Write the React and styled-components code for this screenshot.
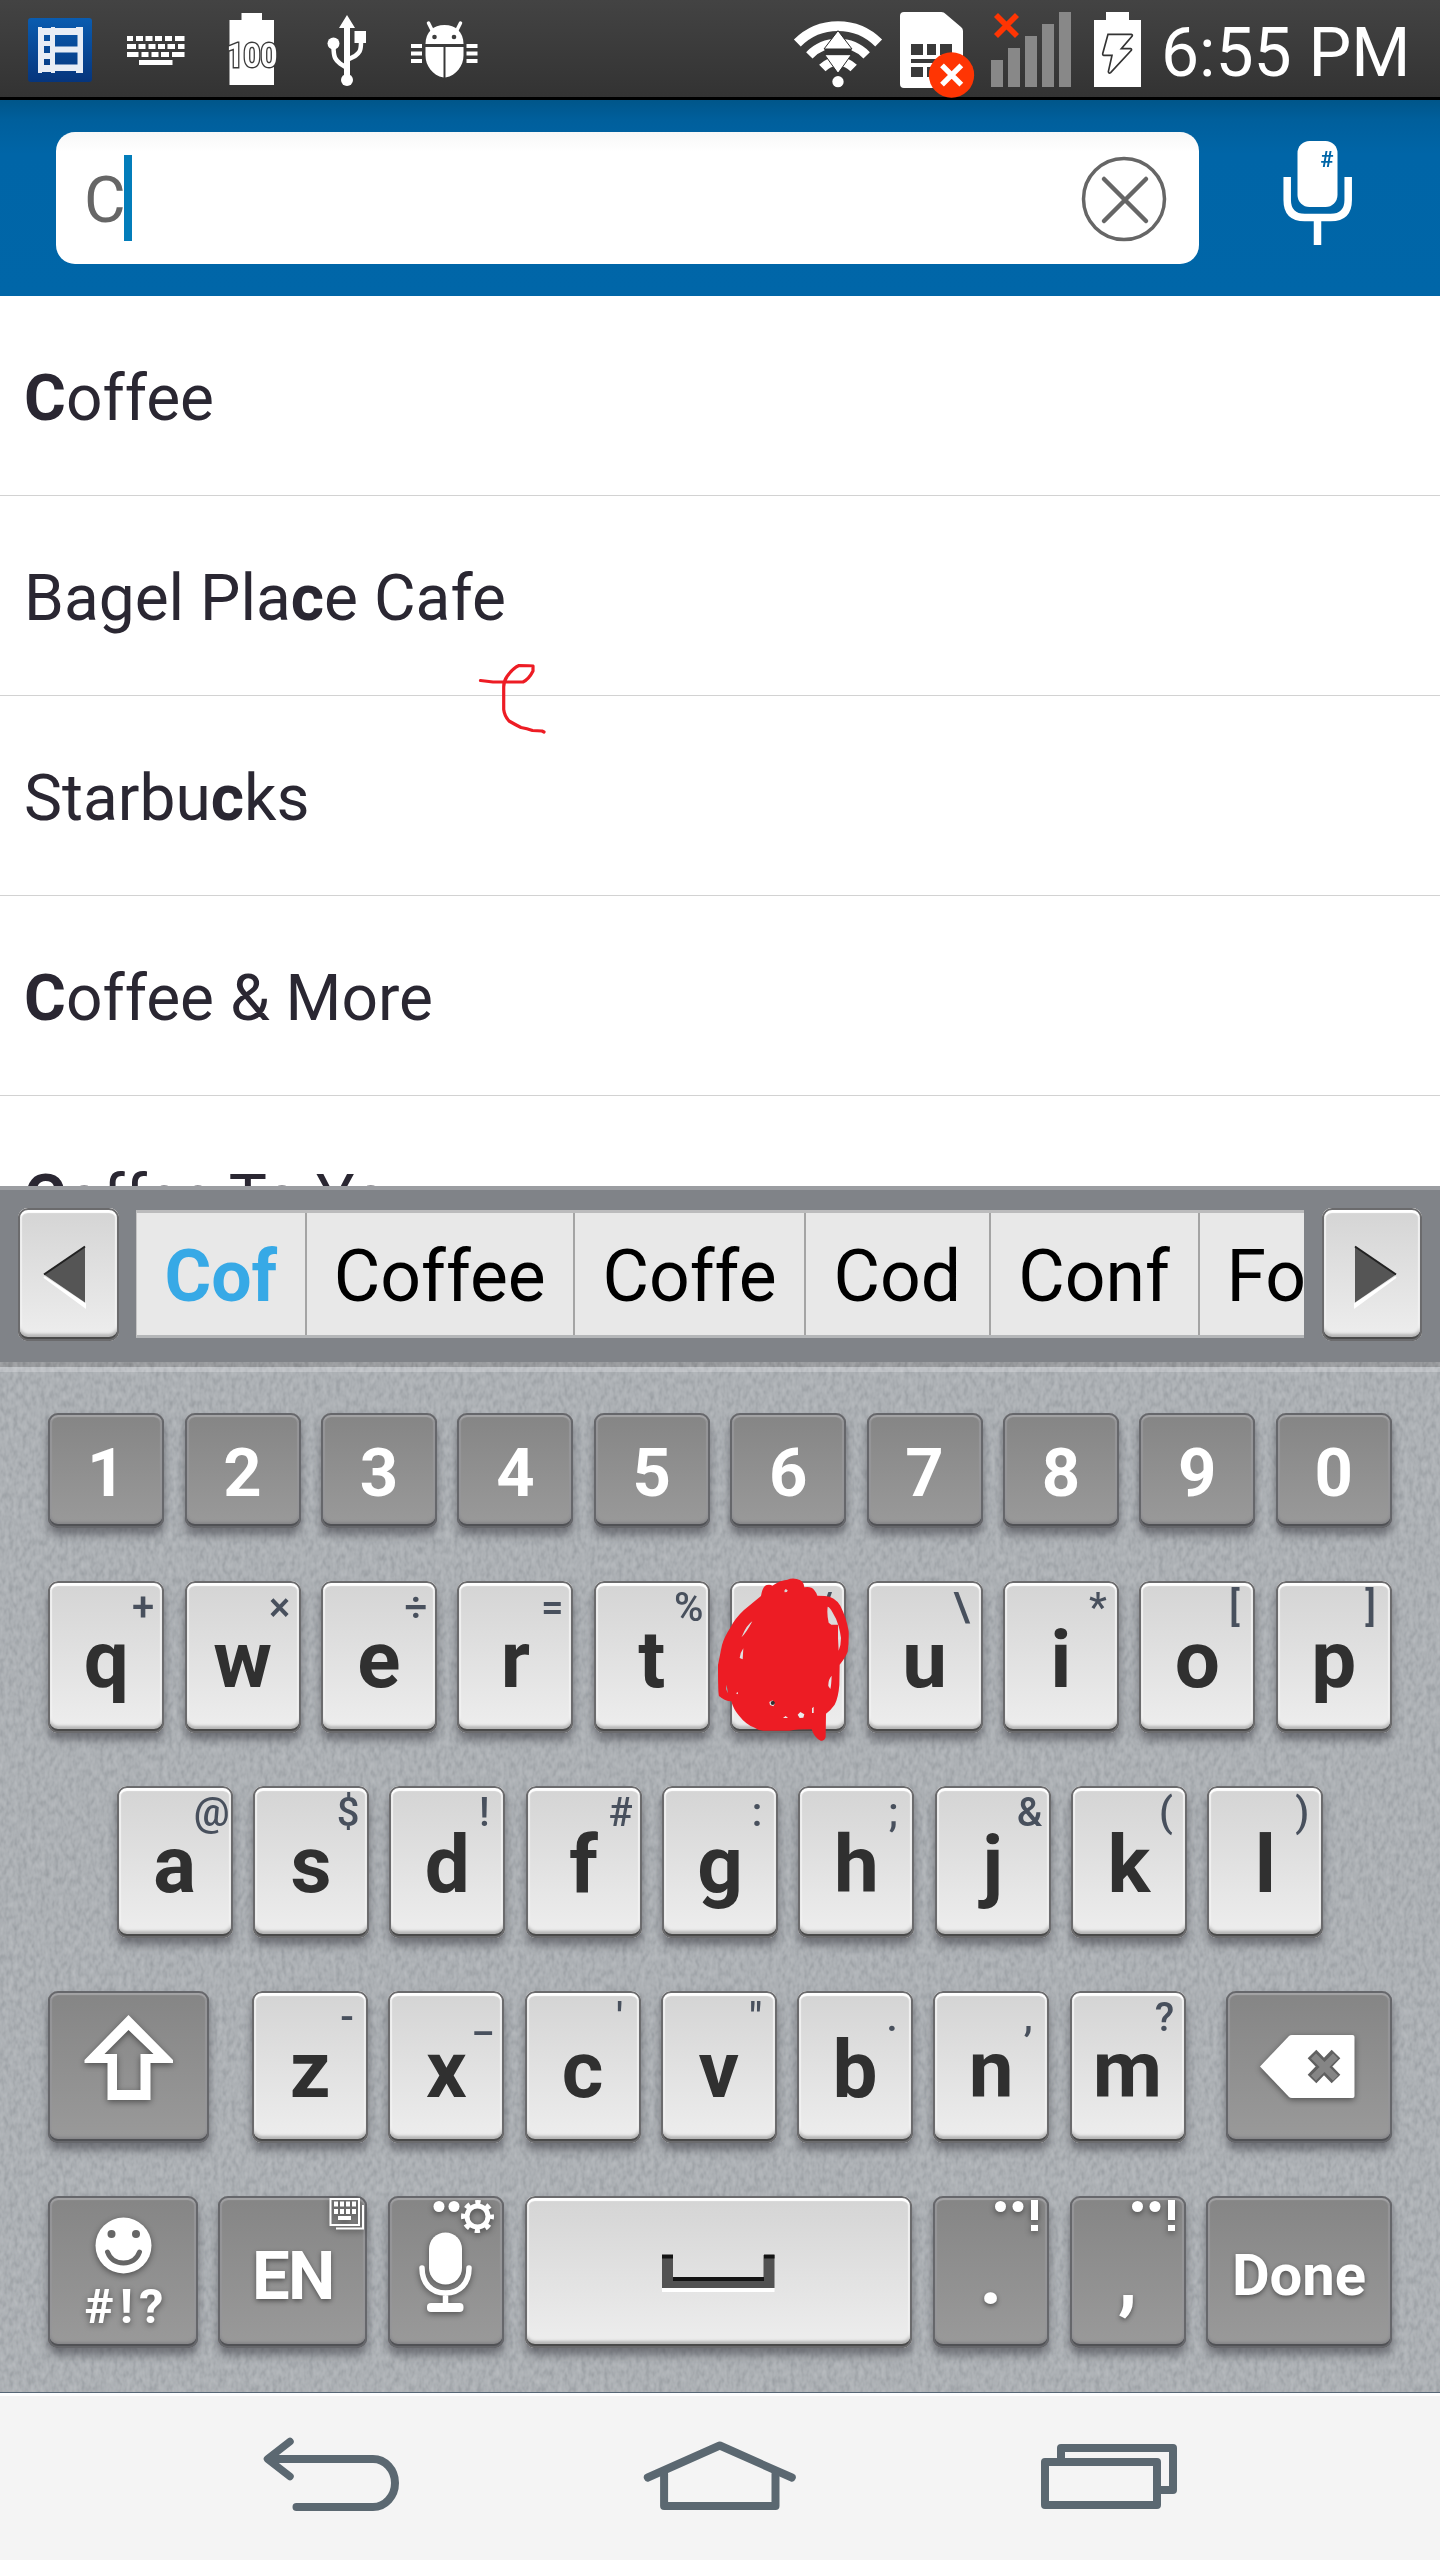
import React from "react";
import styled, { createGlobalStyle, css } from "styled-components";

const GlobalStyle = createGlobalStyle`
  *, *::before, *::after { box-sizing: border-box; }
  body { margin: 0; background: #fff; }
  svg { display: block; overflow: visible; flex: none; }
`;

const Screen = styled.main`
  position: relative;
  display: flex;
  flex-direction: column;
  width: 1440px;
  height: 2560px;
  overflow: hidden;
  background: #fff;
  font-family: Roboto, "Noto Sans", sans-serif;
`;

/* ---------- status bar ---------- */

const StatusBar = styled.header`
  display: flex;
  justify-content: space-between;
  height: 100px;
  padding-left: 12px;
  border-bottom: 3px solid #000;
  background: linear-gradient(#434343, #333);
  color: #fff;
`;

const StatusGroup = styled.div`
  display: flex;
  height: 100px;
`;

const Clock = styled.time`
  width: 290px;
  padding-left: 11px;
  font-size: 67.800px;
  line-height: 106px;
  white-space: nowrap;
`;

function FilmIcon() {
  return (
    <svg width="96" height="100" viewBox="12 0 96 100">
      <defs>
        <linearGradient id="film" x1="0" y1="0" x2="0" y2="1">
          <stop offset="0" stopColor="#0a5cb0" />
          <stop offset="1" stopColor="#06357c" />
        </linearGradient>
      </defs>
      <rect x="28" y="18" width="64" height="64" rx="3" fill="url(#film)" />
      <path
        fill="#e8edf5"
        fillRule="evenodd"
        d="M38 27h4v1h9v-1h4v1h21v-1h7v46h-7v-2H55v2h-4v-1h-9v1h-4zM44 35v6h6v-6zM44 46v7h6v-7zM44 59v6h6v-6zM55 35v11.500h22.500V35zM55 52.500v12h22.500v-12z"
      />
    </svg>
  );
}

const KEY_ROWS = [
  [36, [[127, 6], [136, 7], [145.500, 7], [155, 7], [165, 7], [175, 9.500]]],
  [44, [[127, 9], [138.500, 7], [148.500, 7], [158, 7], [167.500, 7.500], [178, 6.500]]],
  [52, [[127, 11.500], [141.500, 7], [151.500, 7], [161, 8], [172, 12.500]]],
  [60, [[139, 33.500]]],
];

function KeyboardIcon() {
  return (
    <svg width="96" height="100" viewBox="108 0 96 100" fill="#fff">
      {KEY_ROWS.map(([y, keys]) =>
        keys.map(([x, w]) => <rect key={`${x}-${y}`} x={x} y={y} width={w} height="5" />)
      )}
    </svg>
  );
}

function BatteryLevelIcon() {
  return (
    <svg width="96" height="100" viewBox="204 0 96 100" fill="#fff">
      <path d="M241.500 13h20.500v7h12v65h-44.500V20h12z" />
      <text
        x="252"
        y="67"
        textAnchor="middle"
        textLength="51"
        lengthAdjust="spacingAndGlyphs"
        fontSize="34"
        fontWeight="700"
        stroke="#3a3a3a"
        strokeWidth="3"
        paintOrder="stroke"
      >
        100
      </text>
    </svg>
  );
}

function UsbIcon() {
  return (
    <svg width="96" height="100" viewBox="300 0 96 100" fill="#fff">
      <path d="M347 15l8 13h-5v52h-6V28h-5z" />
      <circle cx="347" cy="80" r="6" />
      <circle cx="333.500" cy="43.500" r="6" />
      <rect x="354.500" y="31" width="11.500" height="12" />
      <path
        d="M333.500 46c0 12 2 14 7 18l5 3M361 42c0 10-2 11-6 14l-6 3"
        fill="none"
        stroke="#fff"
        strokeWidth="4.500"
      />
    </svg>
  );
}

function BugIcon() {
  return (
    <svg width="96" height="100" viewBox="396 0 96 100" fill="#fff">
      <path d="M425.500 44c0-12 8-19 19-19s19 7 19 19z" />
      <path d="M428.500 23l4 8M460.500 23l-4 8" stroke="#fff" strokeWidth="3.500" strokeLinecap="round" />
      <g fill="#3c3c3c">
        <circle cx="434.500" cy="37" r="2.300" />
        <circle cx="454" cy="37" r="2.300" />
      </g>
      <path d="M425.500 47h18v30.500c-11-2-18-12-18-22zM445.500 47h18v8.500c0 10-7 20-18 22z" />
      <path d="M411 46h11M411 53.500h11M411 61h11M466.500 46h11M466.500 53.500h11M466.500 61h11" stroke="#fff" strokeWidth="4" />
    </svg>
  );
}

function WifiIcon() {
  return (
    <svg width="104" height="100" viewBox="36 0 312 300">
      <g fill="none" stroke="#fff">
        <path d="M52 129A172 172 0 0 1 296 129" strokeWidth="29" />
        <path d="M88 166A121 121 0 0 1 260 166" strokeWidth="27" />
        <path d="M127 204A66 66 0 0 1 221 204" strokeWidth="27" />
      </g>
      <circle cx="174" cy="245" r="17" fill="#fff" />
      <rect x="134" y="147" width="80" height="16" fill="#333" />
      <path d="M174 92l42 55h-84zM174 220l-40-56h80z" fill="#fff" stroke="#2c2c2c" strokeWidth="3" />
    </svg>
  );
}

function SimIcon() {
  return (
    <svg width="84" height="100" viewBox="348 0 252 300">
      <path d="M372 36H484q8 0 13 6L543 81q6 5 6 12V264H372q-12 0-12-12V48q0-12 12-12z" fill="#fff" />
      <path
        d="M393 132h36v33h-36zM441 132h27v33h-27zM480 132h36v33h-36zM393 177h123v12H393zM393 201h36v30h-36zM441 201h27v30h-27z"
        fill="#3a3a3a"
      />
      <circle cx="514.500" cy="225" r="68" fill="#ff3503" />
      <path d="M486 196l58 58M544 196l-58 58" stroke="#fff" strokeWidth="16" />
    </svg>
  );
}

function SignalIcon() {
  return (
    <svg width="100" height="100" viewBox="600 0 300 300">
      <path d="M633 180h36v81h-36zM684 144h36v117h-36zM735 108h36v153h-36zM786 72h36v189h-36zM837 36h36v225h-36z" fill="#888" />
      <path d="M648 45l63 63M711 45l-63 63" stroke="#ff3503" strokeWidth="17" />
    </svg>
  );
}

function ChargingIcon() {
  return (
    <svg width="70" height="100" viewBox="900 0 210 300">
      <path d="M978 36h69v24h36v201H942V60h36z" fill="#fff" />
      <path
        d="M984 103h70q5 1 2 6l-32 37h28q4 1 2 5l-62 67q-6 4-7-3l11-49h-25q-4-1-3-5z"
        fill="none"
        stroke="#333"
        strokeWidth="5"
      />
    </svg>
  );
}

/* ---------- search header ---------- */

const SearchHeader = styled.section`
  display: flex;
  align-items: center;
  height: 196px;
  padding-left: 56px;
  background: linear-gradient(#00568a 0, #005f9c 20px, #0065a7 54px, #0066a8 100%);
`;

const SearchField = styled.div`
  display: flex;
  align-items: flex-start;
  width: 1143px;
  height: 132px;
  padding-left: 28px;
  border-radius: 19px;
  background: linear-gradient(#f7f7f7, #fff 20px);
`;

const Query = styled.span`
  width: 40px;
  color: #666;
  font-size: 64px;
  line-height: 138px;
`;

const Caret = styled.i`
  width: 8px;
  height: 86px;
  margin-top: 23px;
  background: #037dba;
`;

const ClearButton = styled.div`
  margin: 21px 32px 0 auto;
`;

const VoiceButton = styled.div`
  margin-left: 78px;
`;

/* ---------- suggestions ---------- */

const Suggestions = styled.ul`
  height: 890px;
  margin: 0;
  padding: 0;
  overflow: hidden;
  list-style: none;
`;

const Suggestion = styled.li`
  height: 200px;
  padding-left: 24px;
  border-bottom: 1px solid #d2d2d2;
  color: #2a2732;
  font-size: 64px;
  line-height: 206px;
  white-space: nowrap;

  b { font-weight: 700; }
`;

const SUGGESTIONS = [
  ["", "C", "offee"],
  ["Bagel Pla", "c", "e Cafe"],
  ["Starbu", "c", "ks"],
  ["", "C", "offee & More"],
  ["", "C", "offee To Yo"],
];

/* ---------- key caps ---------- */

const lightCap = css`
  color: #303030;
  background: linear-gradient(#d4d4d4, #eeeeee);
  box-shadow:
    inset 0 0 0 2px #6b6b6d,
    inset 0 -3px 0 1px #4a4a4a,
    inset 0 4px 1px 1px #fff,
    inset 0 -6px 3px 1px #b4b4b4,
    inset 0 0 1px 4px #f4f4f4,
    0 7px 9px rgba(50, 50, 58, ${(p) => (p.$flat ? 0 : 0.5)});
`;

const darkCap = css`
  color: #fff;
  background: linear-gradient(#858585, #9a9a9a);
  box-shadow:
    inset 0 0 0 2px #66676b,
    inset 0 -3px 0 1px #505155,
    inset 0 3px 1px 1px #a3a3a5,
    inset 0 -5px 3px 1px #858588,
    inset 0 0 1px 4px #979799,
    0 7px 9px rgba(50, 50, 58, 0.5);
`;

const Cap = styled.div`
  position: relative;
  flex: none;
  width: ${(p) => p.$width || 116}px;
  height: ${(p) => p.$height || 152}px;
  border-radius: 10px;
  text-align: center;
  ${(p) => (p.$dark ? darkCap : lightCap)}
`;

const Label = styled.span`
  display: block;
  font-size: ${(p) => p.$size || 80}px;
  font-weight: ${(p) => p.$weight || 700};
  line-height: ${(p) => p.$leading || 159}px;
  letter-spacing: ${(p) => p.$tracking || 0}px;
  text-shadow: ${(p) => (p.$shade ? "0 2px 5px rgba(0,0,0,.45)" : "none")};
`;

const Hint = styled.span`
  position: absolute;
  top: 0;
  right: 0;
  display: flex;
  justify-content: center;
  width: 42px;
  color: #48505d;
  font-size: 40px;
  font-weight: 500;
  line-height: 53px;
`;

const Drawing = styled.svg`
  filter: ${(p) => (p.$flat ? "none" : "drop-shadow(0 2px 3px rgba(0,0,0,.45))")};
`;

/* ---------- candidate bar ---------- */

const CandidateBar = styled.section`
  display: flex;
  justify-content: space-between;
  height: 176px;
  padding: 18px 18px 0;
  border-top: 4px solid #9b9da1;
  background: #808388;
`;

const CandidateStrip = styled.div`
  display: flex;
  width: 1168px;
  height: 128px;
  margin-top: 2px;
  overflow: hidden;
  border-top: 3px solid #bbbbbc;
  border-bottom: 3px solid #b4b6b8;
  border-left: 1px solid #c4c4c4;
  background: #e8e8e8;
`;

const Candidate = styled.span`
  flex: none;
  width: ${(p) => p.$width}px;
  border-right: 2px solid #a4a4a4;
  color: ${(p) => (p.$active ? "#37a9e6" : "#000")};
  font-size: 71.500px;
  font-weight: ${(p) => (p.$active ? 700 : 400)};
  line-height: 127px;
  text-align: center;
`;

const CANDIDATES = [
  ["Cof", 169.500],
  ["Coffee", 268.500],
  ["Coffe", 231],
  ["Cod", 184.500],
  ["Conf", 209],
];

const LastCandidate = styled(Candidate)`
  padding-left: 27px;
  text-align: left;
`;

function Arrow({ flip }) {
  return (
    <svg width="100" height="133" viewBox="0 0 100 133">
      <g transform={flip ? "translate(100 0) scale(-1 1)" : undefined}>
        <path d="M26 69l41 30v-3z" stroke="#fff" strokeWidth="2" fill="#fff" />
        <path d="M26 66.500L67 38.500v56z" fill="#555" />
        <path d="M26 66.500L67 38.500" stroke="#222" strokeWidth="2" />
      </g>
    </svg>
  );
}

/* ---------- keyboard ---------- */

const Keyboard = styled.section`
  position: relative;
  display: flex;
  flex-direction: column;
  flex: none;
  height: 1031px;
  padding-top: 51px;
  border-bottom: 1px solid #566675;
  background: linear-gradient(#999b9e 0 5px, #bfc2c6 5px 10px, #acb0b4 10px);
`;

const Grain = styled.svg`
  position: absolute;
  inset: 0;
  width: 100%;
  height: 100%;
  mix-blend-mode: soft-light;
  opacity: 0.4;
`;

const KeyRow = styled.div`
  position: relative;
  display: flex;
  flex: none;
  justify-content: space-between;
  align-items: flex-start;
  height: ${(p) => p.$height || 205}px;
  padding: 0 ${(p) => p.$inset || 48.200}px;
`;

const LastRow = styled(KeyRow)`
  height: 152px;
`;

const LetterGroup = styled.div`
  display: flex;
  justify-content: space-between;
  width: 933.500px;
  margin-right: -3px;
`;

const TOP = [["q", "+"], ["w", "×"], ["e", "÷"], ["r", "="], ["t", "%"], ["y", "/"], ["u", "\\"], ["i", "*"], ["o", "["], ["p", "]"]];
const HOME = [["a", "@"], ["s", "$"], ["d", "!"], ["f", "#"], ["g", ":"], ["h", ";"], ["j", "&"], ["k", "("], ["l", ")"]];
const BOTTOM = [["z", "-"], ["x", "_"], ["c", "'"], ["v", '"'], ["b", "."], ["n", ","], ["m", "?"]];

function Letter({ char, hint }) {
  return (
    <Cap>
      <Label>{char}</Label>
      <Hint>{hint}</Hint>
    </Cap>
  );
}

function ShiftKey() {
  return (
    <Cap $dark $width={160.500}>
      <Drawing width="160" height="152" viewBox="48.5 -9 160 152">
        <path
          fill="#fff"
          fillRule="evenodd"
          d="M129 15l44.500 45v3H151v37h-43V63H85v-3zM129 30l-24 24h12.500v36H141V54h13z"
        />
      </Drawing>
    </Cap>
  );
}

function BackspaceKey() {
  return (
    <Cap $dark $width={166}>
      <Drawing width="165.5" height="152" viewBox="1226 -9 165.5 152">
        <path d="M1260 66.500L1289 36q1-1 3-1h60.500q2 0 2 2v59q0 2-2 2H1292q-2 0-3-1z" fill="#fff" />
        <path d="M1312 54l24 25M1336 54l-24 25" stroke="#606060" strokeWidth="12" />
        <path d="M1313.500 56l22 22M1335.500 56l-22 22" stroke="#858585" strokeWidth="7" />
      </Drawing>
    </Cap>
  );
}

function SymbolsKey() {
  return (
    <Cap $dark $width={149.500}>
      <Drawing width="149" height="152" viewBox="48 196 149 152" fill="#fff">
        <circle cx="123.500" cy="245.500" r="28" />
        <circle cx="111.500" cy="234" r="4" fill="#666" />
        <circle cx="136" cy="234" r="4" fill="#666" />
        <path d="M107.500 252q4 11 16 11t16-11" fill="none" stroke="#666" strokeWidth="5" strokeLinecap="round" />
        <text x="124" y="323" textAnchor="middle" fontSize="49" fontWeight="700" textLength="79">#!?</text>
      </Drawing>
    </Cap>
  );
}

const CornerDrawing = styled(Drawing)`
  position: absolute;
  top: 0;
  right: 0;
`;

function LanguageKey() {
  return (
    <Cap $dark $width={149}>
      <Label $size={67} $leading={161} $tracking={-1.500} $shade>EN</Label>
      <CornerDrawing width="40" height="40" viewBox="327 196 40 40" fill="none">
        <path d="M336 228.500h27V205" stroke="#fff" strokeWidth="2" />
        <path d="M330.500 199h28.500v26h-28.500z" stroke="#fff" strokeWidth="2" />
        <path d="M334 204h22M334 211.500h22" stroke="#fff" strokeWidth="5" strokeDasharray="4 2" />
        <path d="M338 218h13" stroke="#fff" strokeWidth="4" />
      </CornerDrawing>
    </Cap>
  );
}

function VoiceKey() {
  return (
    <Cap $dark>
      <Drawing width="115.5" height="152" viewBox="388.5 196 115.5 152" fill="#fff">
        <rect x="429.500" y="232.500" width="33" height="52" rx="16.500" />
        <path
          d="M422.500 268c0 15 9 25 23.500 25s23.500-10 23.500-25M446 293v12"
          fill="none"
          stroke="#fff"
          strokeWidth="5.500"
          strokeLinecap="round"
        />
        <rect x="427.500" y="303" width="36.500" height="9" rx="4" />
        <circle cx="439.500" cy="206.500" r="5.500" />
        <circle cx="454.500" cy="206.500" r="5.500" />
        <circle cx="478" cy="216.500" r="10.500" fill="none" stroke="#fff" strokeWidth="5" />
        <circle cx="478" cy="216.500" r="14" fill="none" stroke="#fff" strokeWidth="5" strokeDasharray="5.200 5.796" strokeDashoffset="2.600" />
      </Drawing>
    </Cap>
  );
}

function SpaceKey() {
  return (
    <Cap $width={387.500}>
      <Drawing $flat width="387" height="152" viewBox="525 196 387 152" fill="none">
        <path d="M662 290h112.500" stroke="#fff" strokeWidth="4" />
        <path d="M667.500 255v27.500h101.500V255" stroke="#525252" strokeWidth="11" />
        <path d="M673 279h91M662 256.500h11M764 256.500h10.500" stroke="#141414" strokeWidth="4" />
      </Drawing>
    </Cap>
  );
}

function PunctuationKey({ char }) {
  return (
    <Cap $dark>
      <Label $leading={163} $shade>{char}</Label>
      <CornerDrawing width="60" height="40" viewBox="0 0 60 40" fill="#fff">
        <circle cx="11.500" cy="10.500" r="5.500" />
        <circle cx="29" cy="10.500" r="5.500" />
        <path d="M42 4h7v20h-7zM42 29h7v6h-7z" />
      </CornerDrawing>
    </Cap>
  );
}

/* ---------- navigation bar ---------- */

const NavBar = styled.nav`
  display: flex;
  justify-content: space-between;
  align-items: flex-start;
  height: 167px;
  padding: 40px 263px 0;
  border-top: 3px solid #fff;
  background: #f4f4f4;
`;

/* ---------- pen marks drawn over the screen ---------- */

const PenLayer = styled.svg`
  position: absolute;
  top: 0;
  left: 0;
  pointer-events: none;
`;

function PenMarks() {
  return (
    <PenLayer width="1440" height="2560" viewBox="0 0 1440 2560">
      <path
        d="M480.500 680.500L493 682H523Q529 679 533 671V666Q531 665.500 519 665.500Q513 668 507 676.500Q503.700 681 503.700 687V709.500Q504.500 716 509 721Q515 724.500 521 727.500Q527 728.500 532.500 730.500L542 731L544 732"
        fill="none"
        stroke="#ed1c24"
        strokeWidth="3.200"
        strokeLinecap="round"
        strokeLinejoin="round"
      />
      <g transform="translate(710 1570) scale(.33333)">
        <path
          fill="#ed1c24"
          fillRule="evenodd"
          d="M153 78Q158 48 170 45Q182 43 187 47Q209 31 232 29Q247 23 260 27Q281 30 283 52Q304 48 313 61Q319 68 322 77L345 78Q374 80 391 107Q410 145 416 184Q417 220 413 245Q406 263 389 284L388 345Q385 383 374 404Q362 421 348 431L347 501Q343 514 332 512Q313 504 305 478Q260 478 238 482H160Q143 481 131 472Q108 464 86 436Q70 417 64 394Q45 394 27 378Q24 373 24 285Q31 250 36 225Q43 200 61 173Q75 145 102 120ZM353 110Q350 133 356 158L364 164H384V205L386 242Q393 226 393 204Q391 188 386 169Q380 146 367 126Q360 112 353 110ZM127 154Q110 164 95 201Q108 190 127 154ZM100 235Q91 247 89 264L98 268ZM365 317Q354 329 355 348L361 357Q364 345 365 317ZM48 344V358L54 370Q53 356 48 344ZM223 62L227 57L233 61L231 66L224 67ZM263 434L271 426L283 433L280 443L269 444ZM219 444L227 438L234 444ZM306 415L311 410V429H306ZM178 396L188 391L195 400L190 409L180 405ZM78 370L83 366L84 373Z"
        />
        <circle cx="188" cy="399" r="6" fill="#303030" />
      </g>
    </PenLayer>
  );
}

export default function App() {
  return (
    <Screen>
      <GlobalStyle />
      <StatusBar>
        <StatusGroup>
          <FilmIcon />
          <KeyboardIcon />
          <BatteryLevelIcon />
          <UsbIcon />
          <BugIcon />
        </StatusGroup>
        <StatusGroup>
          <WifiIcon />
          <SimIcon />
          <SignalIcon />
          <ChargingIcon />
          <Clock>6:55 PM</Clock>
        </StatusGroup>
      </StatusBar>

      <SearchHeader>
        <SearchField>
          <Query>C</Query>
          <Caret />
          <ClearButton>
            <svg width="86" height="92" viewBox="1081 153 86 92" fill="none" stroke="#666">
              <circle cx="1124" cy="199" r="40.500" strokeWidth="3.500" />
              <path d="M1104 179l42 42M1146 179l-42 42" strokeWidth="4.500" strokeLinecap="round" />
            </svg>
          </ClearButton>
        </SearchField>
        <VoiceButton>
          <svg width="80" height="120" viewBox="1277 138 80 120" fill="#fff">
            <rect x="1297.500" y="141" width="40" height="66" rx="12" />
            <path
              d="M1287.200 177v23q0 17.500 17.500 17.500h26q17.500 0 17.500-17.500v-23M1317.500 217v28"
              fill="none"
              stroke="#fff"
              strokeWidth="7.500"
            />
            <text x="1327" y="167" textAnchor="middle" fontSize="22" fontWeight="700" fill="#0066a8">#</text>
          </svg>
        </VoiceButton>
      </SearchHeader>

      <Suggestions>
        {SUGGESTIONS.map(([before, match, after]) => (
          <Suggestion key={before + match + after}>
            {before}
            <b>{match}</b>
            {after}
          </Suggestion>
        ))}
      </Suggestions>

      <CandidateBar>
        <Cap $flat $width={100.500} $height={133}><Arrow /></Cap>
        <CandidateStrip>
          {CANDIDATES.map(([word, width], i) => (
            <Candidate key={word} $width={width} $active={i === 0}>{word}</Candidate>
          ))}
          <LastCandidate $width={180}>Fo</LastCandidate>
        </CandidateStrip>
        <Cap $flat $width={100.500} $height={133}><Arrow flip /></Cap>
      </CandidateBar>

      <Keyboard>
        <Grain aria-hidden="true">
          <filter id="grain" x="0" y="0" width="100%" height="100%" colorInterpolationFilters="sRGB">
            <feTurbulence type="fractalNoise" baseFrequency="0.22 0.13" numOctaves="2" seed="4" />
            <feColorMatrix values="1 0 0 0 0  1 0 0 0 0  1 0 0 0 0  0 0 0 0 1" />
          </filter>
          <rect width="100%" height="100%" filter="url(#grain)" />
        </Grain>
        <KeyRow $height={168}>
          {"1234567890".split("").map((digit) => (
            <Cap key={digit} $dark $height={115}>
              <Label $size={67} $leading={120}>{digit}</Label>
            </Cap>
          ))}
        </KeyRow>
        <KeyRow>
          {TOP.map(([char, hint]) => <Letter key={char} char={char} hint={hint} />)}
        </KeyRow>
        <KeyRow $inset={116.700}>
          {HOME.map(([char, hint]) => <Letter key={char} char={char} hint={hint} />)}
        </KeyRow>
        <KeyRow>
          <ShiftKey />
          <LetterGroup>
            {BOTTOM.map(([char, hint]) => <Letter key={char} char={char} hint={hint} />)}
          </LetterGroup>
          <BackspaceKey />
        </KeyRow>
        <LastRow>
          <SymbolsKey />
          <LanguageKey />
          <VoiceKey />
          <SpaceKey />
          <PunctuationKey char="." />
          <PunctuationKey char="," />
          <Cap $dark $width={185.500}>
            <Label $size={58} $leading={158} $shade>Done</Label>
          </Cap>
        </LastRow>
      </Keyboard>

      <NavBar>
        <svg width="136" height="80" viewBox="263 2436 136 80" fill="none" stroke="#5b6871" strokeWidth="8" strokeLinejoin="round" strokeLinecap="round">
          <path d="M290 2441.500L267.500 2459l22.500 17.500" strokeWidth="7.500" />
          <path d="M270 2459H373A22 24 0 0 1 373 2507H296.500" />
        </svg>
        <svg width="153" height="80" viewBox="644.2 2436 153 80" fill="none" stroke="#5b6871" strokeWidth="8" strokeLinejoin="round" strokeLinecap="round">
          <path d="M648 2477.500L720 2445.500L792 2477.500" />
          <path d="M664.300 2474V2506H775.700V2474" />
        </svg>
        <svg width="136" height="80" viewBox="1041 2436 136 80" fill="none" stroke="#5b6871" strokeWidth="8" strokeLinejoin="round">
          <path d="M1061 2460V2448H1173V2490H1158" />
          <rect x="1045" y="2462" width="112" height="43" />
        </svg>
      </NavBar>

      <PenMarks />
    </Screen>
  );
}
